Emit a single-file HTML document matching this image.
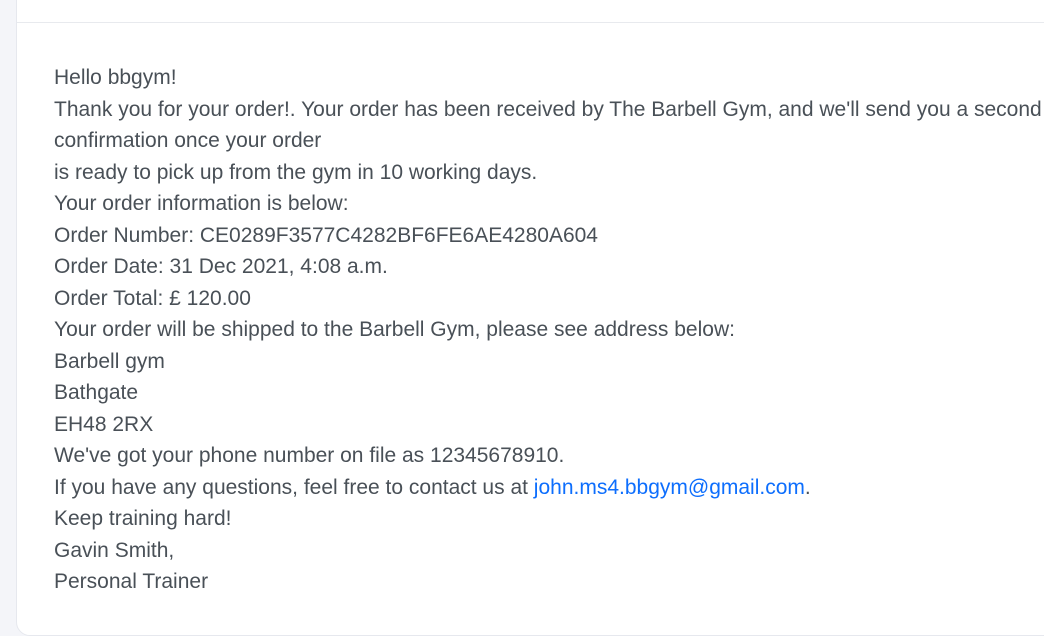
<!DOCTYPE html>
<html><head><meta charset="utf-8"><style>
html,body{margin:0;padding:0;width:1044px;height:636px;overflow:hidden;background:#f4f5f9;}
.card{position:absolute;left:16px;top:-20px;width:1100px;height:654px;background:#fff;border:1px solid #e6e8ee;border-radius:14px;}
.hr{position:absolute;left:17px;top:22px;width:1100px;height:1px;background:#e8eaee;}
.txt{position:absolute;left:54px;top:62px;font-family:"Liberation Sans",Arial,sans-serif;font-size:21px;line-height:31.5px;color:#495057;white-space:nowrap;}
a{color:#0d6efd;text-decoration:none;}
</style></head><body>
<div class="card"></div><div class="hr"></div>
<div class="txt">
Hello bbgym!<br>
Thank you for your order!. Your order has been received by The Barbell Gym, and we'll send you a second<br>
confirmation once your order<br>
is ready to pick up from the gym in 10 working days.<br>
Your order information is below:<br>
Order Number: CE0289F3577C4282BF6FE6AE4280A604<br>
Order Date: 31 Dec 2021, 4:08 a.m.<br>
Order Total: £ 120.00<br>
Your order will be shipped to the Barbell Gym, please see address below:<br>
Barbell gym<br>
Bathgate<br>
EH48 2RX<br>
We've got your phone number on file as 12345678910.<br>
If you have any questions, feel free to contact us at <a>john.ms4.bbgym@gmail.com</a>.<br>
Keep training hard!<br>
Gavin Smith,<br>
Personal Trainer
</div>
</body></html>
